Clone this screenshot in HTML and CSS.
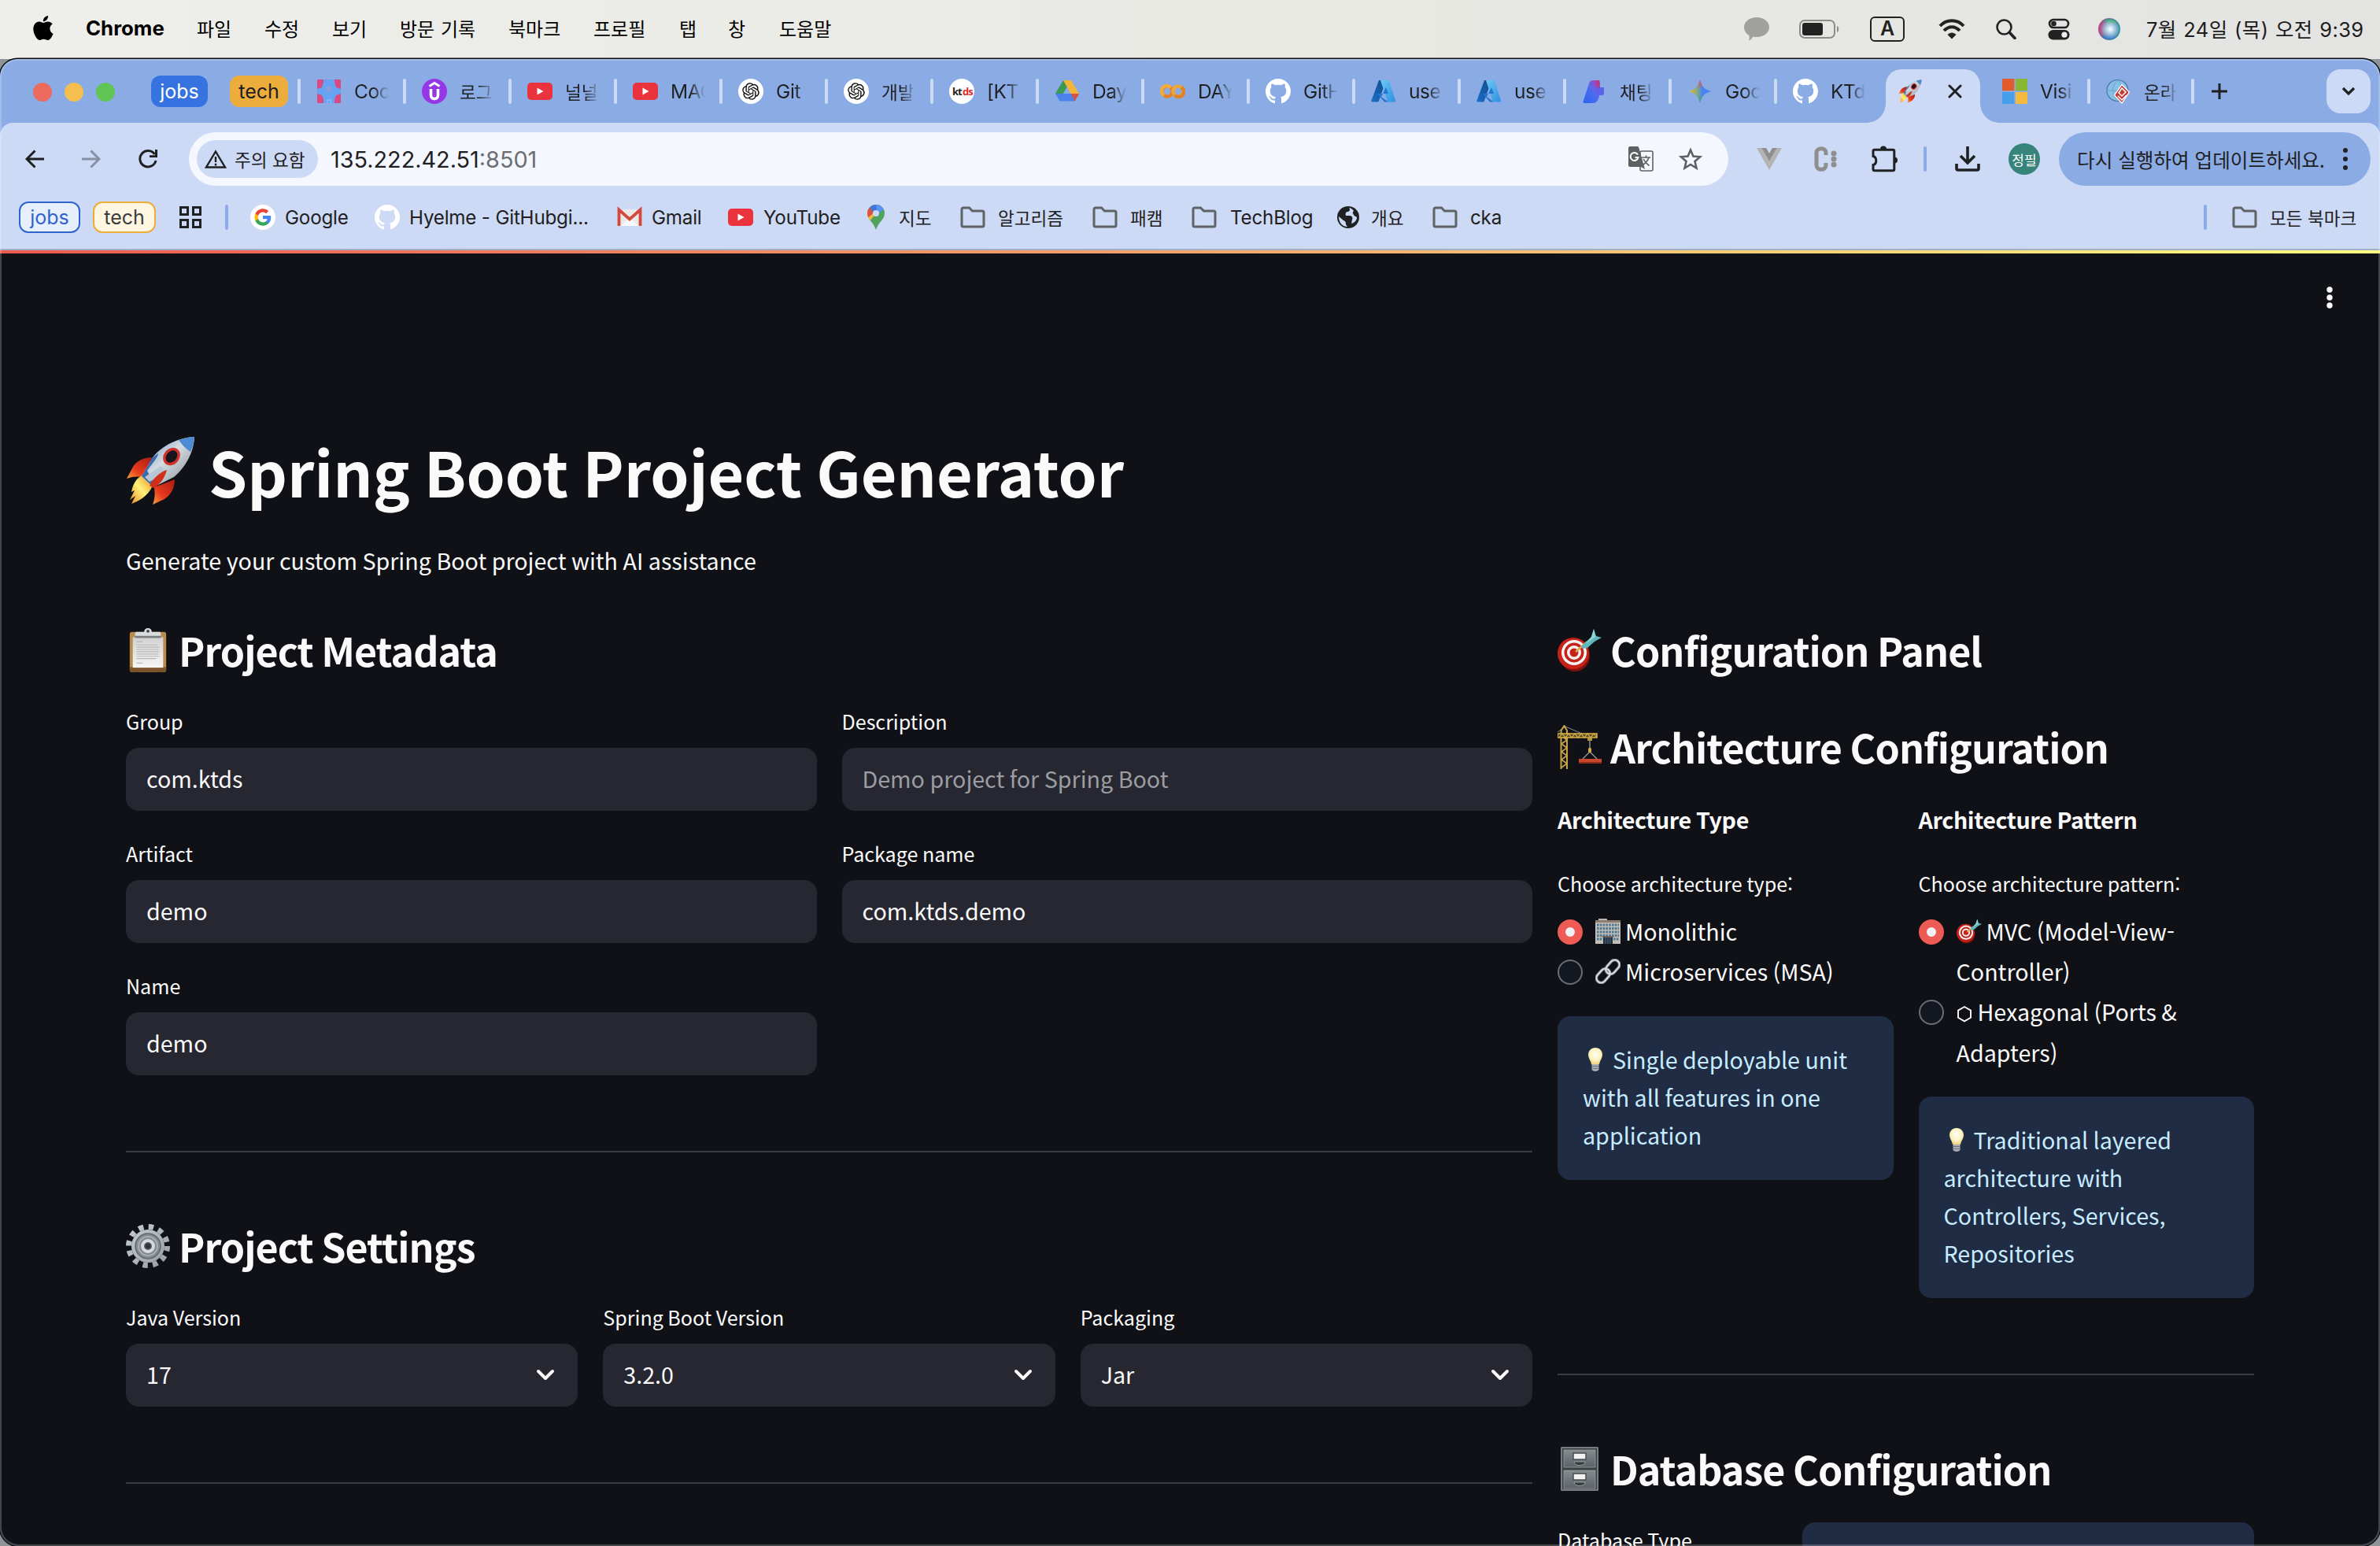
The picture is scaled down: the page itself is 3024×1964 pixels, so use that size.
FILE: index.html
```html
<!DOCTYPE html>
<html lang="ko">
<head>
<meta charset="utf-8">
<title>Spring Boot Project Generator</title>
<link rel="stylesheet" href="styles.css">
</head>
<body>
<svg class="defs" aria-hidden="true">
  <defs>
    <linearGradient id="g-body" x1="0" y1="0" x2="1" y2="1"><stop offset="0" stop-color="#4f86c8"/><stop offset=".45" stop-color="#d5dce0"/><stop offset="1" stop-color="#7c8790"/></linearGradient>
    <linearGradient id="g-flame" x1="1" y1="0" x2="0" y2="1"><stop offset="0" stop-color="#e88a1c"/><stop offset=".5" stop-color="#fff27a"/><stop offset="1" stop-color="#f08a1e"/></linearGradient>
    <linearGradient id="g-fin" x1="1" y1="0" x2="0" y2="1"><stop offset="0" stop-color="#a81c12"/><stop offset=".6" stop-color="#e8391c"/><stop offset="1" stop-color="#f8a040"/></linearGradient>
    <linearGradient id="g-az1" x1="1" y1="0" x2="0" y2="1"><stop offset="0" stop-color="#114a8b"/><stop offset="1" stop-color="#1a6fc8"/></linearGradient>
    <linearGradient id="g-az2" x1="0" y1="0" x2="1" y2="1"><stop offset="0" stop-color="#6cc8f4"/><stop offset="1" stop-color="#2f8fe0"/></linearGradient>
    <linearGradient id="g-gem" x1="0" y1=".5" x2="1" y2=".5"><stop offset="0" stop-color="#f2b92e"/><stop offset=".35" stop-color="#8fae70"/><stop offset=".6" stop-color="#4a84f0"/><stop offset="1" stop-color="#4a84f0"/></linearGradient>
    <linearGradient id="g-gem2" x1=".5" y1="0" x2=".5" y2="1"><stop offset="0" stop-color="#ea4a3c"/><stop offset=".38" stop-color="#ea4a3c" stop-opacity="0"/><stop offset=".65" stop-color="#3aa757" stop-opacity="0"/><stop offset="1" stop-color="#3aa757"/></linearGradient>
    <linearGradient id="g-foundry" x1="0" y1="1" x2="1" y2="0"><stop offset="0" stop-color="#2a64ee"/><stop offset=".55" stop-color="#4a6cf0"/><stop offset="1" stop-color="#c43aa8"/></linearGradient>
    <radialGradient id="g-bulb" cx=".5" cy=".4" r=".6"><stop offset="0" stop-color="#fffef2"/><stop offset=".6" stop-color="#fdf3c4"/><stop offset="1" stop-color="#ecd27c"/></radialGradient>
    <radialGradient id="g-siri" cx=".55" cy=".5" r=".5"><stop offset="0" stop-color="#fff"/><stop offset=".35" stop-color="#b9d4ea"/><stop offset="1" stop-color="#b9d4ea" stop-opacity="0"/></radialGradient>
    <linearGradient id="g-siri2" x1="0" y1=".4" x2="1" y2=".6"><stop offset="0" stop-color="#c8447e"/><stop offset=".45" stop-color="#5a7aa8"/><stop offset="1" stop-color="#2c8f9c"/></linearGradient>
    <linearGradient id="g-gear" x1="0" y1="0" x2="1" y2="1"><stop offset="0" stop-color="#c3ccd2"/><stop offset="1" stop-color="#9a9ea6"/></linearGradient>
    <linearGradient id="g-paper" x1="0" y1="0" x2="0" y2="1"><stop offset="0" stop-color="#d2d2d2"/><stop offset="1" stop-color="#f6f6f6"/></linearGradient>
    <linearGradient id="g-cab" x1="0" y1="0" x2="0" y2="1"><stop offset="0" stop-color="#858b8e"/><stop offset="1" stop-color="#5c6265"/></linearGradient>

    <symbol id="rocket" viewBox="0 0 88 88">
      <path d="M33 27C22 27 13 32 9 39L1 54c7-3 15-3 22-2z" fill="url(#g-fin)"/>
      <path d="M62 55c0 11-5 20-13 25L34 87c3-7 3-15 2-22z" fill="url(#g-fin)"/>
      <path d="M20 50C10 56 8 66 7 71l4-2-6 12 7-5-5 10c8-3 20-8 27-23z" fill="url(#g-flame)"/>
      <path d="M87 1C66 2 46 12 34 27L20 51l15 14 26-13C75 40 86 22 87 1z" fill="url(#g-body)"/>
      <path d="M87 1C80 1 73 3 67 5c4 6 9 11 15 15 3-6 5-12 5-19z" fill="#4e8ad2"/>
      <path d="M34 27L20 51l15 14 6-3c-7-6-11-12-14-18 6-9 14-17 14-22z" fill="#3a6cab"/>
      <path d="M44 38L24 52l6 6 22-12z" fill="#b7c7d6"/>
      <ellipse cx="58" cy="26" rx="12" ry="10" transform="rotate(-50 58 26)" fill="#d2302a"/>
      <ellipse cx="58" cy="26" rx="8.500" ry="6.500" transform="rotate(-50 58 26)" fill="#16161c"/>
      <path d="M52 43c-9 3-17 10-22 20l5 3c8-4 14-12 17-23z" fill="#cf2f1b"/>
    </symbol>
    <symbol id="target" viewBox="0 0 56 56">
      <ellipse cx="22" cy="35" rx="19" ry="20" fill="#7e120e"/>
      <circle cx="20" cy="32" r="20" fill="#c7221a"/><circle cx="21" cy="31" r="16" fill="#f3f3f3"/><circle cx="21" cy="31" r="12.500" fill="#c7221a"/><circle cx="21" cy="31" r="9" fill="#f3f3f3"/><circle cx="21" cy="31" r="5.500" fill="#c7221a"/>
      <path d="M23 30L38 17" stroke="#d8b24a" stroke-width="2.500"/>
      <path d="M30 23L43 11 46 1l3 9 7 2-9 5-9 8-6 1z" fill="#5fb7bd"/>
      <path d="M43 11L46 1l2 10-12 9z" fill="#93d8d8"/>
    </symbol>
    <symbol id="clip" viewBox="0 0 50 58">
      <rect x="1" y="5" width="48" height="53" rx="3" fill="#b98b4d"/><rect x="1" y="51" width="48" height="7" rx="3" fill="#7c5429"/>
      <rect x="5" y="12" width="40" height="40" fill="url(#g-paper)"/>
      <path d="M10 18h8M10 22h28M10 25h30M10 28h30M10 31h30M10 34h29M10 37h30M10 40h26M10 46h8" stroke="#b9b9b9" stroke-width="1.200"/>
      <path d="M8 11V7c0-1 1-2 2-2h10c0-3 2-5 5-5s5 2 5 5h10c1 0 2 1 2 2v4z" fill="#d8dcdf"/><path d="M8 10h34v3H8z" fill="#7c7f82"/><circle cx="25" cy="4" r="2" fill="#40454d"/>
    </symbol>
    <symbol id="gear" viewBox="0 0 56 56">
      <circle cx="28" cy="28" r="24.500" fill="none" stroke="url(#g-gear)" stroke-width="7" stroke-dasharray="6.400 6.428"/>
      <circle cx="28" cy="28" r="21" fill="url(#g-gear)"/><circle cx="28" cy="28" r="16" fill="#868b90" stroke="#62676c" stroke-width="1.500"/>
      <circle cx="28" cy="28" r="12" fill="none" stroke="#a9aeb3" stroke-width="2"/>
      <circle cx="28" cy="28" r="7" fill="#5a5e63" stroke="#d5dade" stroke-width="4"/><circle cx="28" cy="28" r="3.500" fill="#33373c"/>
    </symbol>
    <symbol id="crane" viewBox="0 0 56 56">
      <path d="M10 2L0 9M10 2l21 9" stroke="#8a8f94" stroke-width="1" fill="none"/>
      <path d="M4.500 56V7l4-6 3.500 6v49" fill="none" stroke="#c9a445" stroke-width="2"/>
      <path d="M5 14l7 5-7 5 7 5-7 5 7 5-7 5 7 5-7 5" fill="none" stroke="#c9a445" stroke-width="1.700"/>
      <path d="M0 11h50v5H0z" fill="#5e4d22" stroke="#d9b24a" stroke-width="1.600"/><path d="M2 16l4-5 4 5 4-5 4 5 4-5 4 5 4-5 4 5 4-5 4 5 4-5 4 5" fill="none" stroke="#d9b24a" stroke-width="1.200"/>
      <path d="M41 17v14M41 34l-9 9M41 34l9 9" stroke="#9a9ea2" stroke-width="1.300" fill="none"/><rect x="39" y="29" width="4" height="6" rx="1.500" fill="#d0aa48"/><rect x="38" y="16" width="6" height="4" fill="#b8963c"/>
      <path d="M27 43h29v5H27z" fill="#c9472c"/><path d="M27 47h29v2H27z" fill="#8e2d1b"/>
    </symbol>
    <symbol id="building" viewBox="0 0 32 32">
      <rect x="4" y="0" width="11" height="3" fill="#b8b6b2"/><rect x="0" y="2" width="32" height="30" fill="#c4beb7"/><rect x="0" y="2" width="32" height="3" fill="#8d7c70"/>
      <path d="M2 8h28M2 12.500h28M2 17h28M2 21.500h28M2 26h7M23 26h7" stroke="#4d7896" stroke-width="3" stroke-dasharray="2.600 1.200"/>
      <rect x="9" y="22" width="14" height="2" fill="#6f625a"/><rect x="10" y="24" width="12" height="8" fill="#1e3040"/><path d="M13 24v8M16 24v8M19 24v8" stroke="#66798a" stroke-width=".8"/>
    </symbol>
    <symbol id="link" viewBox="0 0 32 32">
      <g fill="none" stroke-linecap="round"><g stroke="#8b9099" stroke-width="3.600"><rect x="12" y="4.500" width="20" height="12" rx="6" transform="rotate(-48 22 10.500)"/><rect x="0" y="15.500" width="20" height="12" rx="6" transform="rotate(-48 10 21.500)"/></g>
      <g stroke="#e3e8ee" stroke-width="1.500"><rect x="12" y="4.500" width="20" height="12" rx="6" transform="rotate(-48 22 10.500)"/><rect x="0" y="15.500" width="20" height="12" rx="6" transform="rotate(-48 10 21.500)"/></g></g>
    </symbol>
    <symbol id="bulb" viewBox="0 0 32 32">
      <path d="M16 1C10.500 1 7 5 7 10c0 4 3 7 4 12h10c1-5 4-8 4-12 0-5-3.500-9-9-9z" fill="url(#g-bulb)"/>
      <path d="M11.500 22h9v7c-2 2.500-7 2.500-9 0z" fill="#a9adb3"/><path d="M11.500 24.500h9M11.500 27.300h9" stroke="#70757c" stroke-width="1"/>
    </symbol>
    <symbol id="cabinet" viewBox="0 0 48 56">
      <rect width="48" height="56" rx="1.500" fill="#767c7f"/><rect x="2" y="2" width="44" height="52" fill="#3c4144"/>
      <rect x="4" y="4" width="40" height="22" fill="url(#g-cab)" stroke="#9aa0a3" stroke-width=".8"/><rect x="4" y="30" width="40" height="23" fill="url(#g-cab)" stroke="#9aa0a3" stroke-width=".8"/>
      <rect x="16" y="8" width="16" height="8" fill="#f2f2f2" stroke="#494e51" stroke-width="1.500"/><rect x="16" y="34" width="16" height="8" fill="#f2f2f2" stroke="#494e51" stroke-width="1.500"/>
      <path d="M17 19h14c0 6-14 6-14 0zM17 45h14c0 6-14 6-14 0z" fill="#34393c" stroke="#a5abae" stroke-width=".8"/>
    </symbol>
    <symbol id="github" viewBox="0 0 16 16"><path fill="#fff" d="M8 0C3.580 0 0 3.580 0 8c0 3.540 2.290 6.530 5.470 7.590.4.070.55-.17.55-.38 0-.19-.01-.82-.01-1.490-2.010.37-2.530-.49-2.690-.94-.09-.23-.48-.94-.82-1.130-.28-.15-.68-.52-.01-.53.63-.01 1.080.58 1.230.82.72 1.210 1.870.87 2.330.66.07-.52.28-.87.51-1.070-1.780-.2-3.640-.89-3.640-3.950 0-.87.31-1.590.82-2.150-.08-.2-.36-1.020.08-2.120 0 0 .67-.21 2.200.82.64-.18 1.320-.27 2-.27.68 0 1.360.09 2 .27 1.530-1.040 2.200-.82 2.200-.82.44 1.100.16 1.920.08 2.120.51.56.82 1.270.82 2.150 0 3.070-1.870 3.750-3.650 3.950.29.25.54.73.54 1.480 0 1.070-.01 1.930-.01 2.200 0 .21.15.46.55.38A8.013 8.013 0 0016 8c0-4.420-3.580-8-8-8z"/></symbol>
    <symbol id="openai" viewBox="0 0 32 32"><circle cx="16" cy="16" r="16" fill="#fff"/><path transform="translate(5.200 5.200) scale(.9)" fill="#111" d="M22.2819 9.8211a5.9847 5.9847 0 0 0-.5157-4.9108 6.0462 6.0462 0 0 0-6.5098-2.9A6.0651 6.0651 0 0 0 4.9807 4.1818a5.9847 5.9847 0 0 0-3.9977 2.9 6.0462 6.0462 0 0 0 .7427 7.0966 5.98 5.98 0 0 0 .511 4.9107 6.051 6.051 0 0 0 6.5146 2.9001A5.9847 5.9847 0 0 0 13.2599 24a6.0557 6.0557 0 0 0 5.7718-4.2058 5.9894 5.9894 0 0 0 3.9977-2.9001 6.0557 6.0557 0 0 0-.7475-7.0729zm-9.022 12.6081a4.4755 4.4755 0 0 1-2.8764-1.0408l.1419-.0804 4.7783-2.7582a.7948.7948 0 0 0 .3927-.6813v-6.7369l2.02 1.1686a.071.071 0 0 1 .038.052v5.5826a4.504 4.504 0 0 1-4.4945 4.4944zm-9.6607-4.1254a4.4708 4.4708 0 0 1-.5346-3.0137l.142.0852 4.783 2.7582a.7712.7712 0 0 0 .7806 0l5.8428-3.3685v2.3324a.0804.0804 0 0 1-.0332.0615L9.74 19.9502a4.4992 4.4992 0 0 1-6.1408-1.6464zM2.3408 7.8956a4.485 4.485 0 0 1 2.3655-1.9728V11.6a.7664.7664 0 0 0 .3879.6765l5.8144 3.3543-2.0201 1.1685a.0757.0757 0 0 1-.071 0l-4.8303-2.7865A4.504 4.504 0 0 1 2.3408 7.872zm16.5963 3.8558L13.1038 8.364 15.1192 7.2a.0757.0757 0 0 1 .071 0l4.8303 2.7913a4.4944 4.4944 0 0 1-.6765 8.1042v-5.6772a.79.79 0 0 0-.407-.667zm2.0107-3.0231l-.142-.0852-4.7735-2.7818a.7759.7759 0 0 0-.7854 0L9.409 9.2297V6.8974a.0662.0662 0 0 1 .0284-.0615l4.8303-2.7866a4.4992 4.4992 0 0 1 6.6802 4.66zM8.3065 12.863l-2.02-1.1638a.0804.0804 0 0 1-.038-.0567V6.0742a4.4992 4.4992 0 0 1 7.3757-3.4537l-.142.0805L8.704 5.459a.7948.7948 0 0 0-.3927.6813zm1.0976-2.3654l2.602-1.4998 2.6069 1.4998v2.9994l-2.5974 1.4997-2.6067-1.4997Z"/></symbol>
    <symbol id="youtube" viewBox="0 0 32 32"><rect y="5" width="32" height="22" rx="5" fill="#ea333c"/><path d="M12.500 11.500v9l8-4.500z" fill="#fff"/></symbol>
    <symbol id="azure" viewBox="0 0 32 32"><path d="M10 2h9L10 28c-.4 1-1 1.500-2 1.500H2c-1.500 0-2-1-1.500-2z" fill="url(#g-az1)"/><path d="M12 2h9.500c.8 0 1.400.5 1.700 1.300L31 27.500c.5 1.200-.3 2-1.500 2H21z" fill="url(#g-az2)"/><path d="M8 19h14l-3-8-6 12 9 6.500h-5z" fill="#2277d2"/></symbol>
    <symbol id="folder" viewBox="0 0 32 32"><path d="M2 26V6c0-1.100.9-2 2-2h7.500l4 4H28c1.100 0 2 .9 2 2v16c0 1.100-.9 2-2 2H4c-1.100 0-2-.9-2-2z" fill="none" stroke="#5f6368" stroke-width="3"/></symbol>
    <symbol id="down" viewBox="0 0 24 16"><path d="M3 3l9 9 9-9" fill="none" stroke="#fafafa" stroke-width="4" stroke-linecap="round" stroke-linejoin="round"/></symbol>
  </defs>
</svg>

<header class="menubar">
  <svg class="apple" viewBox="2.800 0 18.500 24"><path d="M12.152 6.896c-.948 0-2.415-1.078-3.960-1.040-2.040.027-3.910 1.183-4.961 3.014-2.117 3.675-.546 9.103 1.519 12.090 1.013 1.454 2.208 3.090 3.792 3.039 1.520-.065 2.090-.987 3.935-.987 1.831 0 2.350.987 3.960.948 1.637-.026 2.676-1.480 3.676-2.948 1.156-1.688 1.636-3.325 1.662-3.415-.039-.013-3.182-1.221-3.220-4.857-.026-3.040 2.480-4.494 2.597-4.559-1.429-2.090-3.623-2.324-4.390-2.376-2-.156-3.675 1.090-4.610 1.090zM15.530 3.830c.843-1.012 1.400-2.427 1.245-3.830-1.207.052-2.662.805-3.532 1.818-.78.896-1.454 2.338-1.273 3.714 1.338.104 2.715-.688 3.559-1.701"/></svg>
  <b class="app-name">Chrome</b>
  <span>파일</span><span>수정</span><span>보기</span><span>방문 기록</span><span>북마크</span><span>프로필</span><span>탭</span><span>창</span><span>도움말</span>
  <svg width="32" height="32" viewBox="0 0 32 32"><path d="M16 1c9 0 16 5.500 16 12.500S25 26 16 26c-2 0-3-.1-4.500-.5C10 28 8 30 6 31c.8-2 1-4.500.3-7C2.500 21.500 0 18 0 13.500 0 6.500 7 1 16 1z" fill="#a0a09f"/></svg>
  <svg width="52" height="26" viewBox="0 0 52 26"><rect x="1" y="2" width="44" height="22" rx="6" fill="none" stroke="#8c8c8a" stroke-width="2"/><rect x="4" y="5" width="26" height="16" rx="3" fill="#222"/><path d="M48 9c3 1 3 7 0 8z" fill="#8c8c8a"/></svg>
  <span class="ime">A</span>
  <svg width="34" height="26" viewBox="0 0 34 26"><path d="M2 9C10 0 24 0 32 9M7 15c6-6.500 14-6.500 20 0" fill="none" stroke="#222" stroke-width="4"/><path d="M11.500 20c3-3.500 8-3.500 11 0L17 25.500z" fill="#222"/></svg>
  <svg width="26" height="26" viewBox="0 0 26 26"><circle cx="10.500" cy="10.500" r="9" fill="none" stroke="#222" stroke-width="2.600"/><path d="M17 17l7 7.500" stroke="#222" stroke-width="3.600" stroke-linecap="round"/></svg>
  <svg width="28" height="28" viewBox="0 0 28 28"><rect x="2" y="2" width="24" height="10" rx="5" fill="none" stroke="#222" stroke-width="2.600"/><circle cx="7.500" cy="7" r="3.300" fill="#222"/><rect x=".5" y="15" width="27" height="12.500" rx="6.200" fill="#222"/><circle cx="21" cy="21.200" r="3.600" fill="#eee"/></svg>
  <svg width="28" height="28" viewBox="0 0 28 28"><circle cx="14" cy="14" r="14" fill="url(#g-siri2)"/><path d="M7 3a14 14 0 0 1 17 2c-4 4-10 5-17-2z" fill="#3a9a78"/><path d="M5 24a14 14 0 0 0 18 0c-5-5-12-5-18 0z" fill="#3878c4"/><circle cx="14" cy="14" r="13" fill="url(#g-siri)"/></svg>
  <span class="clock">7월 24일 (목) 오전 9:39</span>
</header>

<div class="window">
  <div class="tabstrip">
    <div class="lights"><i class="red"></i><i class="yellow"></i><i class="green"></i></div>
    <span class="group jobs">jobs</span>
    <span class="group tech">tech</span>
    <div class="tab"><svg class="fav" viewBox="0 0 32 32"><rect x="1" y="1" width="30" height="30" fill="#66a3f2"/><path d="M1 1h8v3L7 11l-6 2zM31 1h-8v3l2 7 6 2zM1 31h8v-5l-2-5-6-2zM31 31h-8v-5l2-5 6-2z" fill="#d84a80"/><circle cx="16" cy="13" r="3.500" fill="#8d9fd8"/><path d="M14 31v-4h4v4" fill="none" stroke="#8db9f5" stroke-width="1.500"/></svg><span>Coc</span></div>
    <div class="tab"><svg class="fav" viewBox="0 0 32 32"><circle cx="16" cy="16" r="16" fill="#9438e6"/><path d="M9.500 9.500L16 5.500l6.500 4" fill="none" stroke="#fff" stroke-width="3"/><path d="M11.500 13v8c0 6 9 6 9 0v-8" fill="none" stroke="#fff" stroke-width="3.600"/></svg><span class="ko">로그</span></div>
    <div class="tab"><svg class="fav"><use href="#youtube"/></svg><span class="ko">널널</span></div>
    <div class="tab"><svg class="fav"><use href="#youtube"/></svg><span>MAC</span></div>
    <div class="tab"><svg class="fav"><use href="#openai"/></svg><span>Git</span></div>
    <div class="tab"><svg class="fav"><use href="#openai"/></svg><span class="ko">개발</span></div>
    <div class="tab"><svg class="fav" viewBox="0 0 32 32"><circle cx="16" cy="16" r="16" fill="#fff"/><text x="4" y="21" class="kt">kt</text><text x="17" y="21" class="ds">ds</text></svg><span>[KT</span></div>
    <div class="tab"><svg class="fav" viewBox="0 0 32 32"><path d="M11 2h10L11 18.500 6.500 27 1 18.500z" fill="#3d9a53"/><path d="M11 2h10l10 17H20.500z" fill="#f1b53b"/><path d="M1 19h30l-5.500 9.500h-19z" fill="#4c82ee"/><path d="M21 19h10l-5.500 9.500z" fill="#d9503f"/></svg><span>Day</span></div>
    <div class="tab"><svg class="fav" viewBox="0 0 32 32"><circle cx="9" cy="16" r="6.500" fill="none" stroke="#e0812c" stroke-width="4.500"/><circle cx="23" cy="16" r="6.500" fill="none" stroke="#eda63a" stroke-width="4.500"/><path d="M13.500 11.500A6.500 6.500 0 1 0 5 21" fill="none" stroke="#f0ac3c" stroke-width="4.500"/><path d="M18.500 20.500A6.500 6.500 0 1 0 27 11" fill="none" stroke="#e0812c" stroke-width="4.500"/></svg><span>DAY</span></div>
    <div class="tab"><svg class="fav"><use href="#github"/></svg><span>GitH</span></div>
    <div class="tab"><svg class="fav"><use href="#azure"/></svg><span>use</span></div>
    <div class="tab"><svg class="fav"><use href="#azure"/></svg><span>use</span></div>
    <div class="tab"><svg class="fav" viewBox="0 0 32 32"><path d="M14 2h8v18c0 6-3 11-8 11H3c-1.500 0-1.800-1-1.500-2L9 6c.8-2.500 2.500-4 5-4z" fill="url(#g-foundry)"/><path d="M19 2h3c1 2 1 6 1 9h5v7c0 2-1 3-3 3h-6z" fill="#5a62e8"/><path d="M17 2h5l1 9h-4z" fill="#b83a8c"/></svg><span class="ko">채팅</span></div>
    <div class="tab"><svg class="fav" viewBox="0 0 32 32"><path d="M16 1c2 9 6 13 15 15-9 2-13 6-15 15C14 22 10 18 1 16 10 14 14 10 16 1z" fill="url(#g-gem)"/><path d="M16 1c2 9 6 13 15 15-9 2-13 6-15 15C14 22 10 18 1 16 10 14 14 10 16 1z" fill="url(#g-gem2)"/></svg><span>Goc</span></div>
    <div class="tab"><svg class="fav"><use href="#github"/></svg><span>KTd</span></div>
    <div class="tab-active"><svg class="fav-rocket"><use href="#rocket"/></svg><svg width="18" height="18" viewBox="0 0 18 18"><path d="M2 2l14 14M16 2L2 16" stroke="#1f2022" stroke-width="3" stroke-linecap="round"/></svg></div>
    <div class="tab first-after"><svg class="fav" viewBox="0 0 32 32"><path d="M0 0h15.300v15.300H0z" fill="#e15b2d"/><path d="M17 0h15v15.300H17z" fill="#89b732"/><path d="M0 17h15.300v15H0z" fill="#459fec"/><path d="M17 17h15v15H17z" fill="#f5bb3e"/></svg><span>Visi</span></div>
    <div class="tab late"><svg class="fav" viewBox="0 0 32 32"><circle cx="14.500" cy="15" r="13.500" fill="#87bfe9" stroke="#46799c" stroke-width="1.200"/><path d="M1 15h27M14.500 2c-8 7-8 19 0 26M14.500 2c8 7 8 19 0 26" stroke="#68a4cc" fill="none"/><path d="M20 7.500l9.500 9.500L20 31l-9.500-10z" fill="#c23a34" stroke="#fff" stroke-width="1.300"/><path d="M20 12l5 5-5 5-4-4zM15 22l5 5 6-6" fill="none" stroke="#fff" stroke-width="1.500"/></svg><span class="ko">온라</span></div>
    <div class="newtab"><svg width="22" height="22" viewBox="0 0 22 22"><path d="M11 1v20M1 11h20" stroke="#1f2022" stroke-width="3"/></svg></div>
    <div class="tabsearch"><svg width="18" height="12" viewBox="0 0 18 12"><path d="M2 2l7 7 7-7" fill="none" stroke="#1f2022" stroke-width="3.200"/></svg></div>
  </div>

  <div class="chrome">
    <div class="toolbar">
      <svg width="24" height="24" viewBox="0 0 24 24"><path d="M24 12H3M12.500 1.500L2 12l10.500 10.500" fill="none" stroke="#1f2022" stroke-width="3"/></svg>
      <svg width="24" height="24" viewBox="0 0 24 24"><path d="M0 12h21M11.500 1.500L22 12 11.500 22.500" fill="none" stroke="#8691a5" stroke-width="3"/></svg>
      <svg width="24" height="24" viewBox="0 0 24 24"><path d="M20.500 6A10.200 10.200 0 1 0 22 14" fill="none" stroke="#1f2022" stroke-width="3"/><path d="M24 0v10H14v-2.800h7V0z" fill="#1f2022"/></svg>
      <div class="omnibox">
        <span class="chip"><svg width="28" height="24" viewBox="0 0 28 24"><path d="M14 2.500L26 22.500H2z" fill="none" stroke="#1f2022" stroke-width="2.400"/><path d="M14 9v7M14 17.800v2.600" stroke="#1f2022" stroke-width="2.400"/></svg>주의 요함</span>
        <span class="url">135.222.42.51<em>:8501</em></span>
        <svg class="translate" width="32" height="32" viewBox="0 0 32 32"><rect x="15" y="6" width="16" height="25" rx="2" fill="none" stroke="#5f6062" stroke-width="1.600"/><path d="M2 0h9c1 0 2 .7 2.300 1.500L21 29l-5-3H2c-1 0-2-1-2-2V2C0 1 1 0 2 0z" fill="#5f6062"/><path d="M12 10.500A5 5 0 1 0 12.500 14H8.500" fill="none" stroke="#fff" stroke-width="2"/><path d="M17 14h11M22.500 11.500V14M26 14c-1 4-4 7-8 10M19 16c1.500 3 4 6 7.500 8.500" fill="none" stroke="#5f6062" stroke-width="1.600"/></svg>
        <svg width="32" height="30" viewBox="0 0 32 30"><path d="M16 3.500l3.400 8 8.700.8-6.600 5.700 2 8.500L16 22l-7.500 4.500 2-8.500-6.600-5.700 8.700-.8z" fill="none" stroke="#5f6062" stroke-width="2.600"/></svg>
      </div>
      <svg width="32" height="28" viewBox="0 0 32 28"><path d="M0 0h12l4 7 4-7h12L16 28z" fill="#b3b3b3"/><path d="M6.500 0H12l4 7 4-7h5.500L16 16.500z" fill="#8e8e8e"/></svg>
      <svg width="30" height="32" viewBox="0 0 30 32"><path d="M15 11V8c0-7-12-7-12 0v16c0 7 12 7 12 0v-3" fill="none" stroke="#8f8f8f" stroke-width="5"/><circle cx="25" cy="9" r="3.500" fill="#8f8f8f"/><circle cx="25" cy="16" r="3.500" fill="#8f8f8f"/><circle cx="25" cy="23" r="3.500" fill="#8f8f8f"/></svg>
      <svg width="34" height="34" viewBox="0 0 34 34"><path d="M2 7c0-1 .8-1.800 1.800-1.800H27c1 0 1.800.8 1.800 1.800v23c0 1-.8 1.800-1.800 1.800H3.800C2.800 31.800 2 31 2 30v-5.500c5-1 5-10 0-11z" fill="none" stroke="#1f2022" stroke-width="3"/><path d="M11 4.500a4 4 0 0 1 8 0zM29 14.500a4 4 0 0 1 0 8z" fill="#1f2022"/></svg>
      <i class="sep"></i>
      <svg width="32" height="34" viewBox="0 0 32 34"><path d="M16 1v20M7 13l9 9 9-9" fill="none" stroke="#1f2022" stroke-width="3.600"/><path d="M2 23v6c0 1.500.5 2 2 2h24c1.500 0 2-.5 2-2v-6" fill="none" stroke="#1f2022" stroke-width="3.600"/></svg>
      <span class="avatar">정필</span>
      <span class="update">다시 실행하여 업데이트하세요.<svg width="8" height="30" viewBox="0 0 8 30"><g fill="#1f2022"><circle cx="4" cy="4" r="3"/><circle cx="4" cy="15" r="3"/><circle cx="4" cy="26" r="3"/></g></svg></span>
    </div>

    <div class="bookmarks">
      <span class="bgroup bjobs">jobs</span>
      <span class="bgroup btech">tech</span>
      <svg width="28" height="28" viewBox="0 0 28 28"><path d="M1.500 1.500h9v9h-9zM17.500 1.500h9v9h-9zM1.500 17.500h9v9h-9zM17.500 17.500h9v9h-9z" fill="none" stroke="#1f2022" stroke-width="3"/></svg>
      <i class="sep"></i>
      <svg class="fav" viewBox="-4.500 -4.500 33 33"><circle cx="12" cy="12" r="16.500" fill="#fff"/><path fill="#4285f4" d="M22.560 12.250c0-.78-.07-1.530-.2-2.250H12v4.260h5.920c-.26 1.370-1.040 2.530-2.210 3.310v2.770h3.570c2.080-1.920 3.280-4.740 3.280-8.090z"/><path fill="#34a853" d="M12 23c2.970 0 5.460-.98 7.280-2.660l-3.570-2.770c-.98.66-2.230 1.060-3.710 1.060-2.860 0-5.290-1.930-6.160-4.530H2.180v2.840C3.990 20.530 7.700 23 12 23z"/><path fill="#fbbc05" d="M5.840 14.090c-.22-.66-.35-1.360-.35-2.090s.13-1.430.35-2.090V7.070H2.180C1.430 8.550 1 10.220 1 12s.43 3.450 1.180 4.930l3.660-2.840z"/><path fill="#ea4335" d="M12 5.380c1.620 0 3.060.56 4.210 1.640l3.150-3.150C17.450 2.090 14.970 1 12 1 7.700 1 3.990 3.470 2.180 7.070l3.660 2.840c.87-2.600 3.300-4.530 6.160-4.530z"/></svg><span>Google</span>
      <svg class="fav"><use href="#github"/></svg><span>Hyelme - GitHubgi...</span>
      <svg class="fav" viewBox="0 0 32 32"><path d="M1 6h30v21H1z" fill="#e9e9e9"/><path d="M5 27l11-11 11 11z" fill="#f9f9f9"/><path d="M2.500 27V6.500L16 18.500 29.500 6.500V27" fill="none" stroke="#d34a3c" stroke-width="3.800"/></svg><span>Gmail</span>
      <svg class="fav"><use href="#youtube"/></svg><span>YouTube</span>
      <svg class="fav" viewBox="0 0 32 32"><path d="M16 0a11 11 0 0 1 11 11c0 8-8 11-11 21-3-10-11-13-11-21A11 11 0 0 1 16 0z" fill="#4fa35a"/><path d="M5 11A11 11 0 0 1 8 3.500l9 7L8.500 20C6.500 17 5 14.500 5 11z" fill="#f3b93c"/><path d="M5 11a11 11 0 0 1 3-7.500L15 9 6.500 16C5.500 14.500 5 13 5 11z" fill="#e0503f"/><path d="M8 3.500A11 11 0 0 1 25.500 5.500L16 15z" fill="#3d74de"/><path d="M16 0a11 11 0 0 1 9.500 5.500L18 13z" fill="#5a94f2"/><circle cx="16" cy="11" r="4" fill="#cddaf5"/></svg><span class="ko">지도</span>
      <svg class="fav"><use href="#folder"/></svg><span class="ko">알고리즘</span>
      <svg class="fav"><use href="#folder"/></svg><span class="ko">패캠</span>
      <svg class="fav"><use href="#folder"/></svg><span>TechBlog</span>
      <svg class="fav" viewBox="0 0 32 32"><circle cx="16" cy="16" r="14" fill="#1f2022"/><path d="M17 4c2 2 1 4-1 5-3 0-4 2-3 5h5c3 0 4 3 3 5l-1 5c4-1 7-4 7-8 0-1-3-1-4-3s-2-3 0-5c-1-2-4-4-6-4zM4 15l6 5c3 1 3 3 3 5l2 3C8 28 4 22 4 15z" fill="#cddaf5"/></svg><span class="ko">개요</span>
      <svg class="fav"><use href="#folder"/></svg><span>cka</span>
      <i class="sep"></i>
      <svg class="fav"><use href="#folder"/></svg><span class="ko">모든 북마크</span>
    </div>
  </div>

  <div class="rainbow"></div>

  <main class="page">
    <svg class="kebab" width="8" height="28" viewBox="0 0 8 28"><g fill="#fafafa"><circle cx="4" cy="4" r="3.700"/><circle cx="4" cy="14" r="3.700"/><circle cx="4" cy="24" r="3.700"/></g></svg>
    <h1><svg><use href="#rocket"/></svg>Spring Boot Project Generator</h1>
    <p class="lead">Generate your custom Spring Boot project with AI assistance</p>

    <div class="columns">
      <section class="left">
        <h2><svg viewBox="0 0 56 58"><use href="#clip" x="3" width="50" height="58"/></svg>Project Metadata</h2>
        <div class="fields two">
          <div class="field"><label>Group</label><div class="input">com.ktds</div></div>
          <div class="field"><label>Description</label><div class="input placeholder">Demo project for Spring Boot</div></div>
          <div class="field"><label>Artifact</label><div class="input">demo</div></div>
          <div class="field"><label>Package name</label><div class="input">com.ktds.demo</div></div>
          <div class="field"><label>Name</label><div class="input">demo</div></div>
        </div>
        <hr>
        <h2 class="after-rule"><svg viewBox="0 0 56 56"><use href="#gear"/></svg>Project Settings</h2>
        <div class="fields three">
          <div class="field"><label>Java Version</label><div class="input select">17<svg><use href="#down"/></svg></div></div>
          <div class="field"><label>Spring Boot Version</label><div class="input select">3.2.0<svg><use href="#down"/></svg></div></div>
          <div class="field"><label>Packaging</label><div class="input select">Jar<svg><use href="#down"/></svg></div></div>
        </div>
        <hr>
      </section>

      <section class="right">
        <h2><svg viewBox="0 0 56 56"><use href="#target"/></svg>Configuration Panel</h2>
        <h2 class="second"><svg viewBox="0 0 56 56"><use href="#crane"/></svg>Architecture Configuration</h2>
        <div class="arch">
          <div class="arch-col">
            <h3>Architecture Type</h3>
            <label>Choose architecture type:</label>
            <div class="radios">
              <div class="radio"><i class="dot on"></i><span><svg><use href="#building"/></svg>Monolithic</span></div>
              <div class="radio"><i class="dot"></i><span><svg><use href="#link"/></svg>Microservices (MSA)</span></div>
            </div>
            <div class="info"><svg><use href="#bulb"/></svg>Single deployable unit<br>with all features in one<br>application</div>
          </div>
          <div class="arch-col">
            <h3>Architecture Pattern</h3>
            <label>Choose architecture pattern:</label>
            <div class="radios">
              <div class="radio"><i class="dot on"></i><span><svg><use href="#target"/></svg>MVC (Model-View-<br>Controller)</span></div>
              <div class="radio"><i class="dot"></i><span><svg class="hex" viewBox="0 0 20 24"><path d="M10 3l8 4.600v9.200l-8 4.600-8-4.600V7.600z" fill="none" stroke="#fafafa" stroke-width="1.900"/></svg>Hexagonal (Ports &amp;<br>Adapters)</span></div>
            </div>
            <div class="info"><svg><use href="#bulb"/></svg>Traditional layered<br>architecture with<br>Controllers, Services,<br>Repositories</div>
          </div>
        </div>
        <hr>
        <h2 class="after-rule"><svg viewBox="-4 0 56 56"><use href="#cabinet" width="48" height="56"/></svg>Database Configuration</h2>
        <div class="db"><label>Database Type</label><div class="info"></div></div>
      </section>
    </div>
  </main>
</div>
</body>
</html>
```
FILE: styles.css
```css
* { box-sizing: border-box; }
html, body { margin: 0; width: 3024px; height: 1964px; overflow: hidden; }
body {
  display: flex;
  flex-direction: column;
  background: #8f9496;
  font-family: "Inter", "Noto Sans CJK KR", sans-serif;
  font-size: 25px;
  color: #1f2022;
  white-space: nowrap;
}
.defs { position: absolute; width: 0; height: 0; }
svg { display: block; flex: none; }
i, em { font-style: normal; }

/* macOS menu bar */
.menubar {
  flex: none;
  height: 75px;
  padding: 0 0 2px 42px;
  display: grid;
  grid-template-columns: 67px 141px 86px 86px 86px 138px 108px 109px 62px 65px 1226px 70px 90px 87px 73px 66px 64px 61px auto;
  align-items: center;
  background: linear-gradient(90deg, #eeeeea, #e9e9e4 60%, #e3e3e2);
  font-family: "Noto Sans CJK KR", sans-serif;
  font-size: 24px;
  color: #000;
  word-spacing: 1px;
}
.menubar > span, .app-name { margin-top: -2px; }
.apple { width: 26px; height: 31px; margin-bottom: 3px; }
.app-name { font-family: "Inter", sans-serif; font-size: 25.800px; font-weight: 700; }
.menubar > .ime {
  width: 44px; height: 32px; margin-top: 0;
  display: grid; place-items: center;
  border: 2.500px solid #222; border-radius: 6px;
  font: 600 25px/1 "Inter", sans-serif; color: #222;
}
.clock { font-family: "Inter", "Noto Sans CJK KR", sans-serif; font-size: 25.500px; letter-spacing: .4px; color: #1c1c1c; }

/* Browser window */
.window {
  position: relative;
  flex: 1;
  min-height: 0;
  display: flex;
  flex-direction: column;
  border-radius: 22px 22px 24px 24px;
  background: #8babe5;
  overflow: hidden;
  box-shadow: 0 0 0 1.500px #0a0c10;
}
.window::after {
  content: "";
  position: absolute;
  inset: 0;
  border-radius: inherit;
  box-shadow: inset 0 0 0 2px rgba(255, 255, 255, .22);
  pointer-events: none;
}

.tabstrip { flex: none; height: 81px; padding: 1px 0 0 42px; display: flex; align-items: center; }
.lights { width: 150px; display: flex; gap: 16px; }
.lights i { width: 24px; height: 24px; border-radius: 50%; margin-top: 2px; }
.red { background: #ec6a5e; }
.yellow { background: #f4bf4f; }
.green { background: #61c554; }
.group { height: 40px; border-radius: 12px; display: grid; place-items: center; }
.jobs { width: 72px; margin-right: 28px; background: #3672e0; color: #fff; }
.tech { width: 74px; margin-right: 13px; background: #edad3c; }
.fav { width: 32px; height: 32px; }
.tab { position: relative; width: 134px; height: 80px; flex: none; display: flex; align-items: center; padding-left: 23px; gap: 16px; font-size: 24.500px; letter-spacing: -.4px; }
.tab::before { content: ""; position: absolute; left: -1px; top: 24px; width: 4px; height: 32px; border-radius: 2px; background: #cddaf4; }
.tab span {
  width: 44px; overflow: hidden;
  -webkit-mask-image: linear-gradient(90deg, #000 55%, transparent);
  mask-image: linear-gradient(90deg, #000 55%, transparent);
}
.tab .ko, .bookmarks .ko { font-family: "Noto Sans CJK KR", sans-serif; font-size: 22.600px; letter-spacing: 0; }
.kt, .ds { font: 700 13px "Open Sans", sans-serif; letter-spacing: -1px; }
.kt { fill: #222; }
.ds { fill: #e02b2b; }
.tab-active {
  position: relative;
  width: 120px; height: 68px; flex: none;
  margin: 12px 5px 0 7px; padding: 0 23px 12px 16px;
  display: flex; align-items: center; justify-content: space-between;
  background: #cddaf5;
  border-radius: 20px 20px 0 0;
}
.tab-active::before, .tab-active::after { content: ""; position: absolute; bottom: 0; width: 24px; height: 24px; }
.tab-active::before { left: -24px; background: radial-gradient(circle at 0 0, transparent 23.500px, #cddaf5 24px); }
.tab-active::after { right: -24px; background: radial-gradient(circle at 100% 0, transparent 23.500px, #cddaf5 24px); }
.fav-rocket { width: 30px; height: 30px; }
.first-after { width: 132px; }
.first-after::before { display: none; }
.late { width: 132px; }
.newtab { position: relative; width: 171px; padding-left: 24px; }
.newtab::before { content: ""; position: absolute; left: -1px; top: -5px; width: 4px; height: 32px; border-radius: 2px; background: #cddaf4; }
.tabsearch { width: 56px; height: 56px; border-radius: 18px; background: #cddaf5; display: grid; place-items: center; }

.chrome { flex: none; height: 162px; background: #cddaf5; border-radius: 16px 16px 0 0; border-bottom: 2px solid #a3afc4; }
.toolbar {
  height: 92px; padding: 0 0 0 32px;
  display: grid; align-items: center;
  grid-template-columns: 72px 72px 64px 1992px 73px 73px 66px 40px 68px 64px 396px;
}
.omnibox { width: 1956px; height: 68px; border-radius: 34px; background: #f4f8fe; display: flex; align-items: center; padding: 0 32px 0 10px; }
.chip { width: 154px; height: 48px; border-radius: 24px; background: #cddaf5; display: flex; align-items: center; gap: 10px; padding-left: 10px; font-family: "Noto Sans CJK KR", sans-serif; font-size: 22.600px; }
.url { margin-left: 16px; font-size: 28.800px; }
.url em { color: #6a6d72; }
.translate { margin-left: auto; margin-right: 31px; }
.sep { width: 4px; height: 32px; border-radius: 2px; background: #8babe5; }
.avatar { width: 40px; height: 40px; border-radius: 50%; background: #37847a; color: #fff; display: grid; place-items: center; font: 400 17px/1 "Noto Sans CJK KR", sans-serif; }
.update { width: 396px; height: 68px; border-radius: 34px; background: #8babe5; display: flex; align-items: center; justify-content: space-between; padding: 0 28px 0 23px; font-family: "Noto Sans CJK KR", sans-serif; font-size: 24.600px; }

.bookmarks {
  height: 56px; padding-left: 24px;
  display: grid; align-items: center;
  grid-template-columns: 94px 110px 58px 32px 44px 114px 44px 264px 44px 97px 45px 127px 45px 78px 48px 120px 48px 78px 49px 134px 45px 78px 48px 932px 36px 48px auto;
  font-size: 24.200px;
  letter-spacing: -.2px;
}
.bgroup { height: 40px; border: 2px solid; border-radius: 12px; display: grid; place-items: center; font-size: 25px; letter-spacing: 0; }
.bjobs { width: 78px; border-color: #2f63cf; background: #e8effc; color: #2f63cf; }
.btech { width: 80px; border-color: #efad35; background: #fef6e0; color: #3b3c3e; }
.rainbow { flex: none; height: 4px; background: linear-gradient(90deg, #ed5a52, #f2a56c 50%, #fdfd80); }

/* Streamlit page */
.page {
  position: relative;
  flex: 1; min-height: 0; overflow: hidden;
  padding: 223px 160px 0;
  background: #0f1116;
  color: #fafafa;
  font-family: "Noto Sans CJK KR", sans-serif;
  font-size: 28.650px;
  line-height: 48px;
  word-spacing: -1.500px;
}
.kebab { position: absolute; right: 60px; top: 42px; }
h1, h2, h3, p { margin: 0; }
h1 { height: 106px; display: flex; align-items: center; gap: 17px; font-size: 78.800px; line-height: 106px; font-weight: 700; word-spacing: -4px; }
h1 svg { width: 88px; height: 88px; }
.lead { margin-top: 37px; }
.columns { margin-top: 55px; display: grid; grid-template-columns: 1787px 885px; gap: 32px; }
h2 { height: 68px; display: flex; align-items: center; gap: 11px; font-size: 50.100px; line-height: 68px; font-weight: 700; letter-spacing: -.95px; word-spacing: -2.500px; }
h2 svg { width: 56px; height: 56px; margin-bottom: -2px; }
.second { margin-top: 55px; }
.after-rule { margin-top: 84px; }
hr { height: 2px; margin: 96px 0 0; border: 0; background: #3a3c41; }
.fields { margin-top: 37px; display: grid; gap: 34px 32px; }
.two { grid-template-columns: 1fr 1fr; }
.three { grid-template-columns: 1fr 1fr 1fr; }
label { display: block; height: 40px; font-size: 25.070px; line-height: 40px; }
.input { height: 80px; margin-top: 14px; padding: 0 26px; border-radius: 16px; background: #262730; line-height: 77px; }
.placeholder { color: #9c9da2; }
.select { display: flex; justify-content: space-between; align-items: flex-start; }
.select svg { width: 24px; height: 16px; margin: 32px 3px 0 0; }

.arch { margin-top: 35px; display: grid; grid-template-columns: 1fr 1fr; gap: 32px; }
h3 { height: 48px; margin-bottom: 37px; font-size: 28.650px; font-weight: 700; letter-spacing: -.4px; }
.radios { margin-top: 14px; margin-bottom: 32.200px; line-height: 51.200px; }
.radio { display: flex; gap: 16px; }
.radio span { margin: 1px 0 -1px; }
.dot { width: 32px; height: 32px; margin-top: 12px; border-radius: 50%; border: 2px solid #6c6e74; background: #131720; flex: none; }
.on { border: 10px solid #ee5a54; background: #f0f2f6; }
.radio svg, .info svg { display: inline-block; width: 32px; height: 32px; margin-right: 6px; vertical-align: -4px; }
.radio .hex { width: 20px; height: 24px; margin-right: 7px; vertical-align: -3px; }
.info { padding: 31px 32px 33px; border-radius: 16px; background: #1f2c43; color: #c7ebff; }
.db { margin-top: 35px; display: grid; grid-template-columns: 279px 1fr; gap: 32px; }
.db label { margin-top: 2px; }
.db .info { height: 200px; }
```
